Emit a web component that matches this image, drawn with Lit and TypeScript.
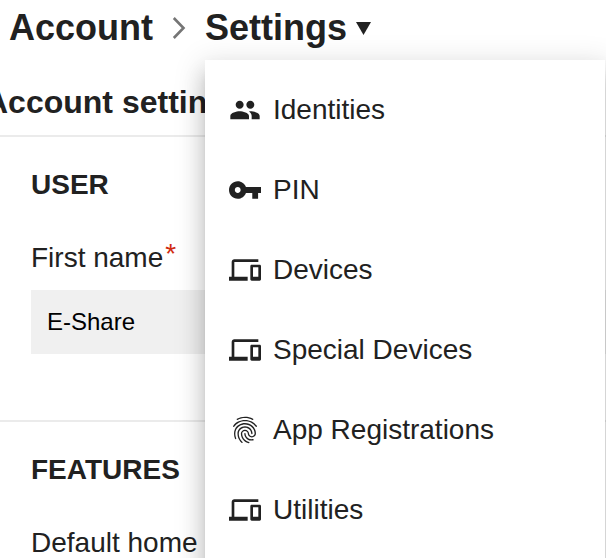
import { LitElement, html, css, svg } from "lit";
import { customElement, property } from "lit/decorators.js";

const ICONS = {
  people: {
    box: "0 0 24 24",
    path: "M16 11c1.66 0 2.99-1.34 2.99-3S17.66 5 16 5c-1.66 0-3 1.34-3 3s1.34 3 3 3zm-8 0c1.66 0 2.99-1.34 2.99-3S9.66 5 8 5C6.34 5 5 6.34 5 8s1.34 3 3 3zm0 2c-2.33 0-7 1.17-7 3.5V19h14v-2.5c0-2.33-4.67-3.5-7-3.5zm8 0c-.29 0-.62.02-.97.05 1.16.84 1.97 1.97 1.97 3.45V19h6v-2.5c0-2.33-4.67-3.5-7-3.5z",
  },
  key: {
    box: "1 1 22 22",
    path: "M12.65 10C11.83 7.67 9.61 6 7 6c-3.31 0-6 2.69-6 6s2.69 6 6 6c2.61 0 4.83-1.67 5.65-4H17v4h4v-4h2v-4H12.65zM7 14c-1.1 0-2-.9-2-2s.9-2 2-2 2 .9 2 2-.9 2-2 2z",
  },
  devices: {
    box: "0 0 24 24",
    path: "M4 6h18V4H4c-1.100 0-2 .9-2 2v11H0v3h14v-3H4V6zm19 2h-6c-.55 0-1 .45-1 1v10c0 .55.45 1 1 1h6c.55 0 1-.45 1-1V9c0-.55-.45-1-1-1zm-1 9h-4v-7h4v7z",
  },
  fingerprint: {
    box: "0 0 24 24",
    path: "M17.81 4.47c-.08 0-.16-.02-.23-.06C15.66 3.42 14 3 12.01 3c-1.98 0-3.86.47-5.57 1.41-.24.13-.54.04-.68-.2-.13-.24-.04-.55.2-.68C7.82 2.52 9.86 2 12.01 2c2.13 0 3.99.47 6.03 1.52.25.13.34.43.21.67-.09.18-.26.28-.44.28zM3.5 9.72c-.1 0-.2-.03-.29-.09-.23-.16-.28-.47-.12-.7.99-1.4 2.25-2.5 3.75-3.27C9.98 4.04 14 4.03 17.15 5.65c1.5.77 2.76 1.86 3.75 3.25.16.22.11.54-.12.7-.23.16-.54.11-.7-.12-.9-1.26-2.04-2.25-3.39-2.94-2.87-1.47-6.54-1.47-9.4.01-1.36.7-2.5 1.7-3.4 2.96-.08.14-.23.21-.39.21zm6.25 12.07c-.13 0-.26-.05-.35-.15-.87-.87-1.34-1.43-2.01-2.64-.69-1.23-1.05-2.73-1.05-4.34 0-2.97 2.54-5.39 5.66-5.39s5.66 2.42 5.66 5.39c0 .28-.22.5-.5.5s-.5-.22-.5-.5c0-2.42-2.09-4.39-4.66-4.39-2.57 0-4.66 1.97-4.66 4.39 0 1.44.32 2.77.93 3.85.64 1.15 1.08 1.64 1.85 2.42.19.2.19.51 0 .71-.11.1-.24.15-.37.15zm7.17-1.85c-1.19 0-2.24-.3-3.1-.89-1.49-1.01-2.38-2.65-2.38-4.39 0-.28.22-.5.5-.5s.5.22.5.5c0 1.41.72 2.74 1.94 3.56.71.48 1.54.71 2.54.71.24 0 .64-.03 1.04-.1.27-.05.53.13.58.41.05.27-.13.53-.41.58-.57.11-1.07.12-1.21.12zM14.91 22c-.04 0-.09-.01-.13-.02-1.59-.44-2.63-1.03-3.72-2.1-1.4-1.39-2.17-3.24-2.17-5.22 0-1.62 1.38-2.94 3.08-2.94 1.7 0 3.08 1.32 3.08 2.94 0 1.07.93 1.94 2.08 1.94s2.08-.87 2.08-1.94c0-3.77-3.25-6.83-7.25-6.83-2.84 0-5.44 1.58-6.61 4.03-.39.81-.59 1.76-.59 2.8 0 .78.07 2.01.67 3.61.1.26-.03.55-.29.64-.26.1-.55-.04-.64-.29-.49-1.31-.73-2.61-.73-3.96 0-1.2.23-2.29.68-3.24 1.33-2.79 4.28-4.6 7.51-4.6 4.55 0 8.25 3.51 8.25 7.83 0 1.62-1.38 2.94-3.08 2.94s-3.08-1.32-3.08-2.94c0-1.07-.93-1.94-2.08-1.94s-2.08.87-2.08 1.94c0 1.71.66 3.31 1.87 4.51.95.94 1.86 1.46 3.27 1.85.27.07.42.35.35.61-.05.23-.26.38-.47.38z",
  },
};

type IconName = keyof typeof ICONS;

const MENU: { icon: IconName; label: string }[] = [
  { icon: "people", label: "Identities" },
  { icon: "key", label: "PIN" },
  { icon: "devices", label: "Devices" },
  { icon: "devices", label: "Special Devices" },
  { icon: "fingerprint", label: "App Registrations" },
  { icon: "devices", label: "Utilities" },
];

@customElement("menu-item")
class MenuItem extends LitElement {
  @property() icon: IconName = "devices";
  @property() label = "";

  static styles = css`
    :host {
      display: flex;
      align-items: center;
      gap: 12px;
      height: 80px;
      padding: 0 24px;
      box-sizing: border-box;
    }
    .icon {
      width: 32px;
      height: 32px;
      flex: none;
      fill: #212121;
    }
    .label {
      font-size: 28px;
      line-height: 40px;
      white-space: nowrap;
    }
  `;

  render() {
    const icon = ICONS[this.icon];
    return html`
      <svg class="icon" viewBox=${icon.box}>${svg`<path d=${icon.path}></path>`}</svg>
      <span class="label">${this.label}</span>
    `;
  }
}

@customElement("app-root")
class AppRoot extends LitElement {
  static styles = css`
    :host {
      display: block;
      position: relative;
      width: 606px;
      height: 558px;
      overflow: hidden;
      background: #fff;
      color: #212121;
      font-family: "Liberation Sans", Arial, sans-serif;
    }
    .crumbs {
      display: flex;
      align-items: center;
      height: 55px;
      padding-left: 9px;
      font-size: 36px;
      font-weight: 700;
    }
    .chevron {
      width: 14px;
      height: 24px;
      margin: 0 19px 0 19px;
      fill: none;
      stroke: #757575;
      stroke-width: 2.6;
    }
    .caret {
      width: 16px;
      height: 14px;
      margin-left: 8px;
      fill: #212121;
    }
    .title {
      margin: 0 0 0 -15px;
      padding-top: 12px;
      height: 68px;
      box-sizing: content-box;
      font-size: 32px;
      font-weight: 700;
      line-height: 70px;
      white-space: nowrap;
    }
    .section {
      display: flex;
      flex-direction: column;
      border-top: 2px solid #ebebeb;
      padding: 28px 0 0 31px;
    }
    .user {
      height: 255px;
    }
    .heading {
      margin: 0;
      font-size: 28px;
      font-weight: 700;
      line-height: 40px;
    }
    .field-label {
      display: flex;
      margin-top: 33px;
      font-size: 28px;
      line-height: 40px;
      white-space: nowrap;
    }
    .required {
      margin: -4px 0 0 2px;
      color: #d02b10;
    }
    .input {
      margin-top: 12px;
      height: 64px;
      padding-left: 16px;
      background: #f0f0f0;
      color: #000;
      font-size: 24px;
      line-height: 64px;
    }
    .menu {
      position: absolute;
      top: 60px;
      left: 205px;
      width: 400px;
      height: 600px;
      padding-top: 10px;
      box-sizing: border-box;
      background: #fff;
      box-shadow:
        0 10px 10px -6px rgba(0, 0, 0, 0.2),
        0 16px 20px 2px rgba(0, 0, 0, 0.14),
        0 6px 28px 4px rgba(0, 0, 0, 0.12);
    }
  `;

  render() {
    return html`
      <nav class="crumbs">
        <span>Account</span>
        <svg class="chevron" viewBox="0 0 14 24"><path d="M1.800 2L11.500 12L1.800 22"></path></svg>
        <span>Settings</span>
        <svg class="caret" viewBox="0 0 16 14"><path d="M1 1H16L8.500 14Z"></path></svg>
      </nav>
      <h1 class="title">Account settings</h1>
      <section class="section user">
        <h2 class="heading">USER</h2>
        <div class="field-label"><span>First name</span><span class="required">*</span></div>
        <div class="input">E-Share</div>
      </section>
      <section class="section">
        <h2 class="heading">FEATURES</h2>
        <div class="field-label">Default home</div>
      </section>
      <div class="menu">
        ${MENU.map((m) => html`<menu-item .icon=${m.icon} .label=${m.label}></menu-item>`)}
      </div>
    `;
  }
}
